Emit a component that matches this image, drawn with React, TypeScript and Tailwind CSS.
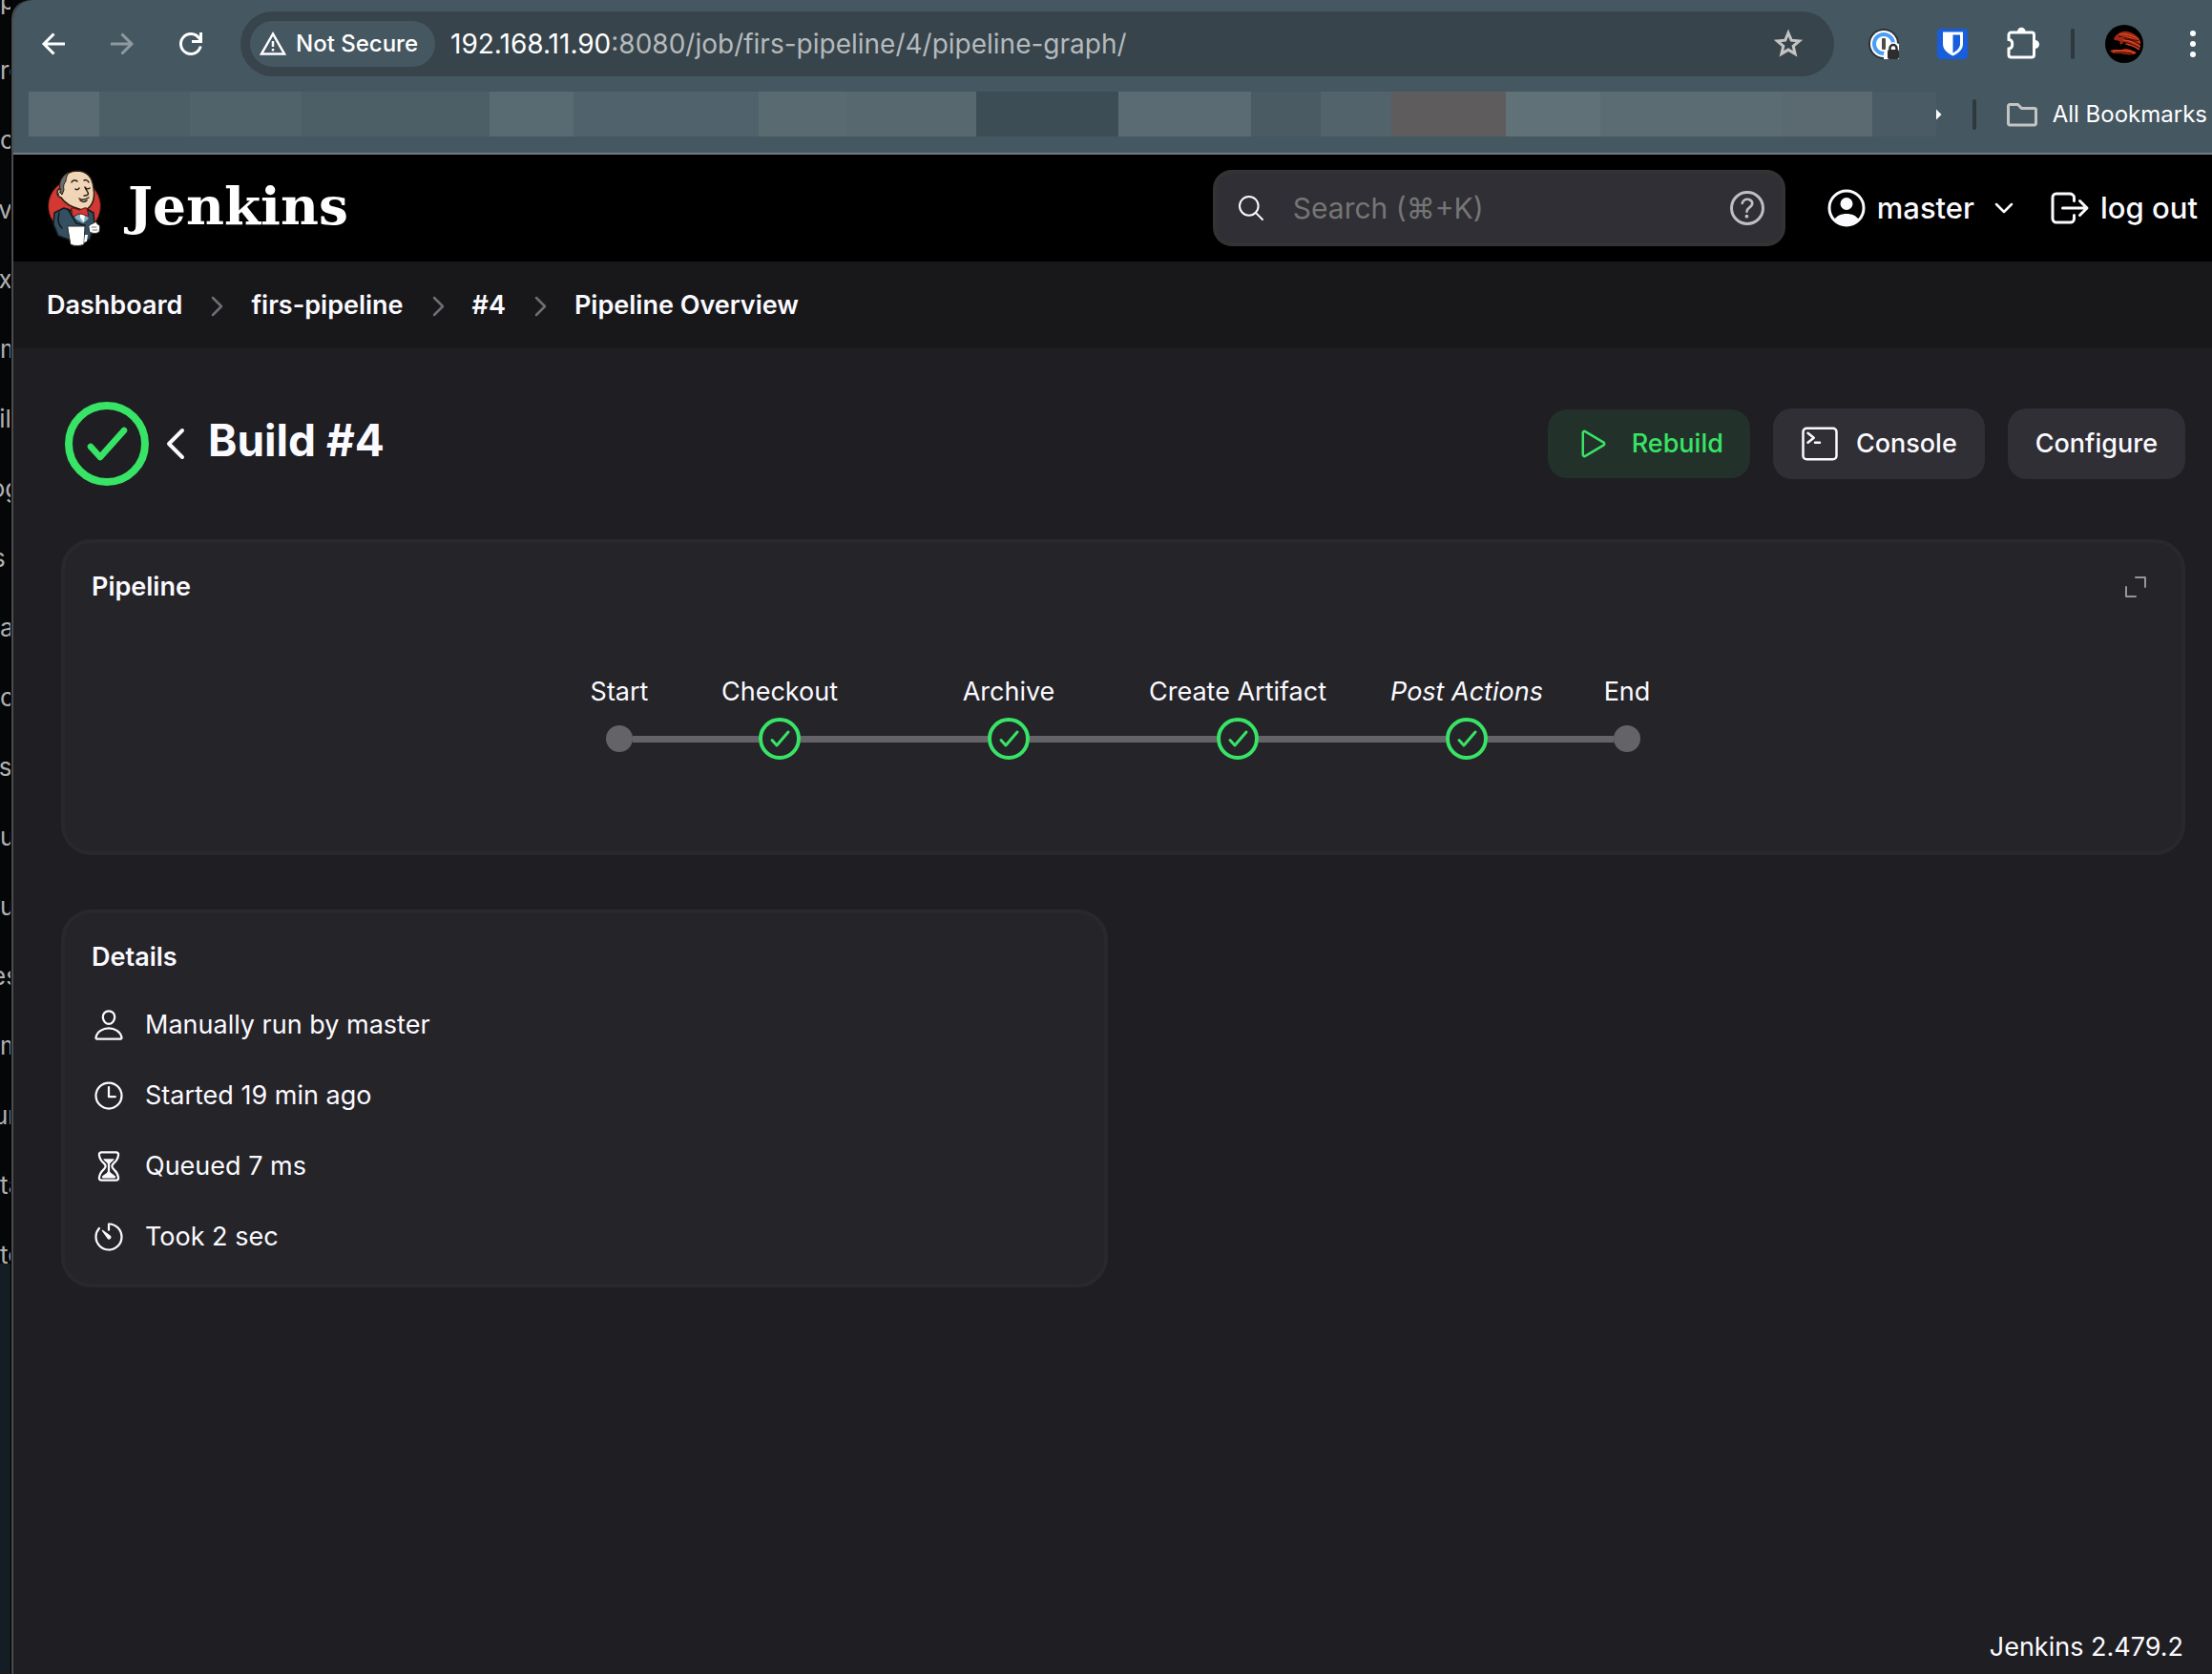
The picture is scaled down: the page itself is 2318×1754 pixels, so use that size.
import React from "react";
import {
  IoHelpCircleOutline,
  IoHourglassOutline,
  IoLogOutOutline,
  IoPersonOutline,
  IoPlayOutline,
  IoSearchOutline,
  IoTerminalOutline,
  IoTimeOutline,
  IoTimerOutline,
} from "react-icons/io5";

/* Line ends of the terminal window that peeks out on the left */
const edgeText: [string, string][] = [
  ["p", "justify-start"],
  ["re", "justify-start"],
  ["c", "justify-start"],
  ["v", "justify-center"],
  ["x", "justify-center"],
  ["m", "justify-start"],
  ["il", "justify-center"],
  ["og", "justify-center"],
  ["s", "justify-start -ml-2"],
  ["a", "justify-start"],
  ["c", "justify-start"],
  ["s", "justify-center"],
  ["u", "justify-start"],
  ["u", "justify-start"],
  ["es", "justify-center"],
  ["m", "justify-start"],
  ["ur", "justify-center"],
  ["ta", "justify-start"],
  ["to", "justify-start"],
];

/* Blurred-out bookmarks: width share and colour of each block */
const bookmarkBlocks: [number, string][] = [
  [74, "bg-[#5a6b73]"],
  [95, "bg-[#4c5f67]"],
  [117, "bg-[#50636b]"],
  [197, "bg-[#4c5f66]"],
  [88, "bg-[#586a72]"],
  [194, "bg-[#50626c]"],
  [92, "bg-[#596a71]"],
  [136, "bg-[#57686f]"],
  [149, "bg-[#3d4d55]"],
  [139, "bg-[#5b6b73]"],
  [73, "bg-[#4a5b63]"],
  [74, "bg-[#52636b]"],
  [120, "bg-[#5f5c5d]"],
  [99, "bg-[#617178]"],
  [191, "bg-[#5b6c73]"],
  [94, "bg-[#5a6a70]"],
  [67, "bg-[#4b5b66]"],
];

function BackIcon() {
  return (
    <svg className="size-8" viewBox="0 0 32 32" fill="none" stroke="currentColor" strokeWidth="3">
      <path d="M28 16H6M16.5 5.5 6 16l10.500 10.500" />
    </svg>
  );
}

function ForwardIcon() {
  return (
    <svg className="size-8" viewBox="0 0 32 32" fill="none" stroke="currentColor" strokeWidth="3">
      <path d="M4 16h22M15.500 5.500 26 16 15.500 26.500" />
    </svg>
  );
}

function ReloadIcon() {
  return (
    <svg className="size-8" viewBox="0 0 32 32" fill="none" stroke="currentColor" strokeWidth="3">
      <path d="M26.200 18.500A10.500 10.500 0 1 1 24.500 9.800L26.500 12" />
      <path d="M26.500 4v9.500H17" />
    </svg>
  );
}

function WarningIcon() {
  return (
    <svg className="size-7" viewBox="0 0 28 28" fill="none" stroke="currentColor" strokeWidth="2.500">
      <path d="M14 3.500 2 24.500h24z" />
      <path d="M14 11v6M14 19v2.500" />
    </svg>
  );
}

function StarIcon() {
  return (
    <svg className="size-8" viewBox="0 0 32 32" fill="none" stroke="currentColor" strokeWidth="3">
      <path d="m16 4.500 3.200 7.700 8.300.7-6.300 5.400 1.900 8.100-7.100-4.300-7.100 4.300 1.900-8.100-6.300-5.400 8.300-.7z" />
    </svg>
  );
}

function OnePasswordIcon() {
  return (
    <svg className="size-8" viewBox="0 0 32 32">
      <circle cx="16" cy="16" r="16" fill="#2b3339" />
      <circle cx="16" cy="16" r="14" fill="#fff" />
      <circle cx="16" cy="16" r="10" fill="none" stroke="#4a9df3" strokeWidth="4" />
      <rect x="14" y="10" width="4" height="12" rx="1" fill="#4d4d4d" />
      <path d="M16 32v-6l4-10 6-2 6 2v16z" fill="#fff" />
      <rect x="20" y="22" width="12" height="10" rx="2" fill="#2d2d2d" />
      <path d="M22.500 23v-2.500a3.500 3.500 0 0 1 7 0V23" fill="none" stroke="#2d2d2d" strokeWidth="2.500" />
    </svg>
  );
}

function BitwardenIcon() {
  return (
    <svg className="size-8" viewBox="0 0 32 32">
      <rect width="32" height="32" rx="4" fill="#175ddc" />
      <path d="M6 3.500h21V16c0 6-5 10-10.500 12.500C11 26 6 22 6 16z" fill="#fff" />
      <path d="M16.500 6.500h7.500V16c0 4-3 7-7.500 9.500z" fill="#175ddc" />
    </svg>
  );
}

function PuzzleIcon() {
  return (
    <svg className="size-9" viewBox="0 0 36 36">
      <path
        d="M3 8.500A2.500 2.500 0 0 1 5.500 6h21.500A2.500 2.500 0 0 1 29.500 8.500V29.500a2.500 2.500 0 0 1-2.500 2.500h-21.500A2.500 2.500 0 0 1 3 29.500v-6.500c5-.5 5-9 0-9.500z"
        fill="none"
        stroke="#fff"
        strokeWidth="3"
      />
      <path d="M12 5a4.300 4.300 0 0 1 8.600 0zM30.500 14a4.500 4.500 0 0 1 0 9z" fill="#fff" />
    </svg>
  );
}

function AvatarIcon() {
  return (
    <svg className="size-10" viewBox="0 0 40 40" fill="none">
      <circle cx="20" cy="20" r="20" fill="#000" />
      <path d="M9 15c2-5 8-9 14-8 6 1 12 5 14 10l-1 10c-4-3-8-5-12-5l-3-4-5 3-1-4-5-1z" fill="#a12713" />
      <path d="M5 27c5-2 11 0 16-2 5 0 9 3 12 5-5 2-11 1-16 0-5 0-9 1-12-3z" fill="#b92b14" />
      <path
        d="M15 10c6-1 13 1 20 5M17 13c7-1 13 2 20 6M19 16c6 0 12 3 18 7M21 20c5 0 10 2 14 6M8 27c8 1 14-1 24 2"
        stroke="#e8582c"
        strokeWidth="1"
      />
      <path
        d="M14 12c6 1 12 3 21 5M20 15c6 0 11 2 17 6M18 18c5 1 11 2 17 6M12 17l4 1M10 29c6-1 12 0 18 1"
        stroke="#1a0301"
        strokeWidth="0.800"
      />
    </svg>
  );
}

function FolderIcon() {
  return (
    <svg className="h-7 w-8 text-[#c4c4c4]" viewBox="0 0 32 28" fill="none" stroke="currentColor" strokeWidth="3">
      <path d="M1.500 5A1.500 1.500 0 0 1 3 3.500h8.500l4 4H29A1.500 1.500 0 0 1 30.500 9v14.500A1.500 1.500 0 0 1 29 25H3a1.500 1.500 0 0 1-1.500-1.500z" />
    </svg>
  );
}

function JenkinsMark() {
  return (
    <svg className="h-20 w-14" viewBox="0 0 56 80" strokeLinejoin="round" strokeLinecap="round">
      <ellipse cx="28" cy="38" rx="27.500" ry="28" fill="#d33833" stroke="#3a1210" strokeWidth="1" />
      <path d="M7 45 17 40l11 4 13-3 7 4 1 12-5 16-14 3-19-7-5-12z" fill="#335061" stroke="#14191c" strokeWidth="1.500" />
      <path d="M14 29c-2 0-4-2-4-5 0-3 1-4 3-4 0-11 6-18 17-19 11 0 17 7 18 18 1 6 1 12-2 17-3 5-8 7-13 5-8-2-15-6-19-12z" fill="#f0d6b7" stroke="#2b2018" strokeWidth="1.500" />
      <path d="M13 20c-2-8 3-15 10-18-3 3-4 7-4 10-2 2-3 5-2 9l-2 5c-2-1-2-4-2-6z" fill="#6d6b6d" stroke="#2b2018" strokeWidth="1" />
      <path d="M14 23c-3-1-4 5 0 6" fill="none" stroke="#2b2018" strokeWidth="1" />
      <path d="M25 13c1-2 4-3 6-1M38 11c2-1 4 0 5 2M29 20c1 1 3 1 4-1M40 19c1 1 3 1 4 0M39 18c1 4 5 6 3 8-1 1-2 1-4 1M33 30c3 2 7 1 10-1M34 32c3 2 5 2 7 0" fill="none" stroke="#2b2018" strokeWidth="1.500" />
      <path d="M27 44h11l5 7-6 5-8-5z" fill="#81b0c4" />
      <path d="m34 45 5 1-1 9-4-5z" fill="#fff" />
      <path d="M25 40c3-1 6 2 8 2 2 0 5-3 8-2l2 8c-3 1-6-2-9-2-3 0-6 4-8 2z" fill="#d33833" stroke="#5b0f0d" strokeWidth="1" />
      <path d="M12 45c-2 8-1 12 3 16M21 41l9 15 9 2" fill="none" stroke="#14191c" strokeWidth="1.500" />
      <path d="M21 59h18l-1 19c-4 2-11 2-14 0z" fill="#fff" stroke="#2b2b2b" strokeWidth="1" />
      <path d="M39 68h3l-1 7-3 1z" fill="#fff" />
      <path d="M43 59c2-3 4-2 6-4 2-1 3 1 3 2 3 0 3 4 2 8-3 2-7 2-10 0z" fill="#fff" stroke="#2b2b2b" strokeWidth="1" />
      <path d="M46 60h5M47 63h5" stroke="#777" strokeWidth="1" />
    </svg>
  );
}

function UserCircleIcon() {
  return (
    <svg className="size-10" viewBox="0 0 40 40">
      <circle cx="20" cy="20" r="18" fill="none" stroke="currentColor" strokeWidth="3" />
      <circle cx="20" cy="15.500" r="6.500" fill="currentColor" />
      <path d="M7.500 32c2-4 7-6 12.500-6s10.500 2 12.500 6A18 18 0 0 1 20 38 18 18 0 0 1 7.500 32z" fill="currentColor" />
    </svg>
  );
}

function SuccessIcon({ className, large }: { className: string; large?: boolean }) {
  return large ? (
    <svg className={className} viewBox="0 0 88 88" fill="none" stroke="#38e466" strokeLinecap="round" strokeLinejoin="round">
      <circle cx="44" cy="44" r="40" strokeWidth="8" />
      <path d="m27 47 10 11 25-28" strokeWidth="6.500" />
    </svg>
  ) : (
    <svg className={className} viewBox="0 0 44 44" fill="none" stroke="#38e466" strokeLinecap="round" strokeLinejoin="round">
      <circle cx="22" cy="22" r="20" strokeWidth="4" />
      <path d="m14 23.500 5 5.500 12-14" strokeWidth="3" />
    </svg>
  );
}

function CrumbChevron() {
  return (
    <svg className="h-6 w-4 text-[#6f6e74]" viewBox="0 0 16 24" fill="none" stroke="currentColor" strokeWidth="2.500" strokeLinecap="round" strokeLinejoin="round">
      <path d="m4 3 9 9-9 9" />
    </svg>
  );
}

function Stage({ name, kind, italic }: { name: string; kind: "start" | "stage" | "end"; italic?: boolean }) {
  const width = kind === "stage" ? "w-60" : "w-24";
  return (
    <li className={`flex flex-col items-center gap-[7px] ${width}`}>
      <span className={`whitespace-nowrap leading-10 ${italic ? "italic" : ""}`}>{name}</span>
      <div className="flex h-11 w-full items-center">
        <span className={`h-[7px] flex-1 ${kind === "start" ? "" : "bg-[#646368]"}`} />
        {kind === "stage" ? <SuccessIcon className="size-11" /> : <span className="size-7 rounded-full bg-[#646368]" />}
        <span className={`h-[7px] flex-1 ${kind === "end" ? "" : "bg-[#646368]"}`} />
      </div>
    </li>
  );
}

function Detail({ icon, children }: { icon: React.ReactNode; children: React.ReactNode }) {
  return (
    <li className="flex h-[38px] items-center gap-5">
      <span className="flex w-9 justify-center text-4xl">{icon}</span>
      {children}
    </li>
  );
}

function BrowserBar() {
  return (
    <div className="rounded-tl-[20px] border-b-2 border-[#6e7d85] bg-[#455761] pt-3 pb-4 text-white">
      <div className="flex h-[68px] items-center">
        <div className="flex w-[238px] shrink-0 items-center gap-10 pl-[26px]">
          <button aria-label="Back"><BackIcon /></button>
          <button aria-label="Forward" className="text-[#8f9aa0]"><ForwardIcon /></button>
          <button aria-label="Reload"><ReloadIcon /></button>
        </div>
        <div className="flex h-full flex-1 items-center rounded-full bg-[#38444b] pr-8 pl-[10px]">
          <button className="flex h-12 items-center gap-[10px] rounded-full bg-[#455761] pr-[18px] pl-[10px] text-[24px] font-medium">
            <WarningIcon />
            Not Secure
          </button>
          <p className="ml-4 flex-1 text-[28px] text-[#b4babd]">
            <span className="text-white">192.168.11.90</span>:8080/job/firs-pipeline/4/pipeline-graph/
          </p>
          <button aria-label="Bookmark this page" className="text-[#c4c4c4]"><StarIcon /></button>
        </div>
        <div className="flex w-[396px] shrink-0 items-center pl-9">
          <button aria-label="1Password"><OnePasswordIcon /></button>
          <button aria-label="Bitwarden" className="ml-10"><BitwardenIcon /></button>
          <button aria-label="Extensions" className="ml-10"><PuzzleIcon /></button>
          <span className="ml-8 h-8 w-1 rounded-full bg-[#2e383e]" />
          <button aria-label="Profile" className="ml-8"><AvatarIcon /></button>
          <button aria-label="Menu" className="ml-[49px] flex flex-col gap-[5px]">
            <span className="size-[6px] rounded-full bg-white" />
            <span className="size-[6px] rounded-full bg-white" />
            <span className="size-[6px] rounded-full bg-white" />
          </button>
        </div>
      </div>
      <div className="mt-4 flex h-12 items-center pr-[5px] pl-4">
        <div className="flex h-[47px] flex-1 self-start">
          {bookmarkBlocks.map(([share, color], i) => (
            <span key={i} className={color} style={{ flexGrow: share, flexBasis: 0 }} />
          ))}
        </div>
        <svg className="h-3 w-[6px]" viewBox="0 0 6 12" fill="#fff">
          <path d="M0 0.500 5.500 6 0 11.500z" />
        </svg>
        <span className="mr-8 ml-8 h-8 w-1 rounded-full bg-[#2e383e]" />
        <button className="flex items-center gap-4 text-[24px] whitespace-nowrap">
          <FolderIcon />
          All Bookmarks
        </button>
      </div>
    </div>
  );
}

export default function App() {
  return (
    <div className="flex min-h-screen bg-[#050607] font-['Inter',sans-serif] text-[27px] text-[#fbfaff]">
      <aside className="flex w-3 shrink-0 flex-col overflow-hidden border-r border-black">
        <div className="h-[1324px] overflow-hidden text-[26px] text-[#b0b0b0]">
          <div className="-mt-9">
            {edgeText.map(([text, place], i) => (
              <p key={i} className={`flex h-[73px] leading-[74px] ${place}`}>{text}</p>
            ))}
          </div>
        </div>
        <div className="flex-1 bg-[#141d24]" />
      </aside>

      <div className="flex min-w-0 flex-1 flex-col rounded-tl-[20px] border-l-2 border-[#4c4c4e] bg-[#1f1e23]">
        <BrowserBar />

        <header className="flex h-28 items-center bg-black pr-[15px] pl-9">
          <a href="#" className="flex items-center gap-7">
            <JenkinsMark />
            <span className="pb-[6px] font-['DejaVu_Serif',serif] text-[55px] leading-none font-bold text-white">Jenkins</span>
          </a>
          <label className="ml-auto flex h-20 w-[600px] items-center rounded-[20px] border-4 border-[#333333] bg-[#302f35] pr-3 pl-5">
            <IoSearchOutline className="size-8 shrink-0" />
            <input
              type="search"
              aria-label="Search"
              placeholder="Search (⌘+K)"
              className="ml-7 min-w-0 flex-1 bg-transparent text-[30px] outline-none placeholder:text-[#757575]"
            />
            <IoHelpCircleOutline className="size-12 text-[#bfbec4]" />
          </label>
          <button className="ml-11 flex items-center gap-3 text-[31px] font-medium">
            <UserCircleIcon />
            master
            <svg className="ml-2 h-4 w-6" viewBox="0 0 24 16" fill="none" stroke="currentColor" strokeWidth="2.500" strokeLinecap="round" strokeLinejoin="round">
              <path d="m3 4 8 8 8-8" />
            </svg>
          </button>
          <a href="#" className="ml-8 flex items-center gap-2 text-[31px] font-medium whitespace-nowrap">
            <IoLogOutOutline className="size-12" />
            log out
          </a>
        </header>

        <nav aria-label="Breadcrumb" className="flex h-[91px] items-center gap-7 bg-[#18181b] pt-[2px] pl-[35px] font-semibold">
          <a href="#">Dashboard</a>
          <CrumbChevron />
          <a href="#">firs-pipeline</a>
          <CrumbChevron />
          <a href="#">#4</a>
          <CrumbChevron />
          <a href="#">Pipeline Overview</a>
        </nav>

        <main className="flex-1 pt-14 pr-7 pl-[50px]">
          <div className="flex h-[88px] items-center pl-1">
            <SuccessIcon large className="size-[88px]" />
            <a href="#" aria-label="Back to job" className="ml-4">
              <svg className="h-10 w-7" viewBox="0 0 28 40" fill="none" stroke="currentColor" strokeWidth="4" strokeLinecap="round" strokeLinejoin="round">
                <path d="M19 6 5 20l14 14" />
              </svg>
            </a>
            <h1 className="ml-[18px] pb-2 text-[46px] leading-none font-bold">Build #4</h1>
            <div className="ml-auto flex items-center gap-6 font-medium">
              <button className="flex h-[72px] items-center gap-5 rounded-[20px] bg-[#223129] px-7 text-[#38e466]">
                <IoPlayOutline className="size-10" />
                Rebuild
              </button>
              <button className="flex h-[74px] items-center gap-[18px] rounded-[20px] bg-[#302f35] px-[29px]">
                <IoTerminalOutline className="size-10" />
                Console
              </button>
              <button className="h-[74px] rounded-[20px] bg-[#302f35] px-[29px]">Configure</button>
            </div>
          </div>

          <section className="mt-14 rounded-[32px] border-4 border-[#29282d] bg-[#252429] px-7 py-[26px]">
            <div className="flex items-center justify-between leading-10">
              <h2 className="font-semibold">Pipeline</h2>
              <button aria-label="Expand" className="mr-2 text-[#96959a]">
                <svg className="size-6" viewBox="0 0 24 24" fill="none" stroke="currentColor" strokeWidth="2" strokeLinecap="round" strokeLinejoin="round">
                  <path d="M12 2h10v10M2 12v10h10" />
                </svg>
              </button>
            </div>
            <ol className="my-[70px] flex justify-center">
              <Stage name="Start" kind="start" />
              <Stage name="Checkout" kind="stage" />
              <Stage name="Archive" kind="stage" />
              <Stage name="Create Artifact" kind="stage" />
              <Stage name="Post Actions" kind="stage" italic />
              <Stage name="End" kind="end" />
            </ol>
          </section>

          <div className="mt-[57px] grid grid-cols-2 gap-8">
            <section className="rounded-[32px] border-4 border-[#29282d] bg-[#252429] px-7 pt-[26px] pb-[30px]">
              <h2 className="leading-10 font-semibold">Details</h2>
              <ul className="mt-8 flex flex-col gap-9">
                <Detail icon={<IoPersonOutline />}>Manually run by master</Detail>
                <Detail icon={<IoTimeOutline />}>Started 19 min ago</Detail>
                <Detail icon={<IoHourglassOutline />}>Queued 7 ms</Detail>
                <Detail icon={<IoTimerOutline />}>Took 2 sec</Detail>
              </ul>
            </section>
          </div>
        </main>

        <footer className="flex justify-end pr-[30px] pb-2 leading-10">
          <a href="#">Jenkins 2.479.2</a>
        </footer>
      </div>
    </div>
  );
}
